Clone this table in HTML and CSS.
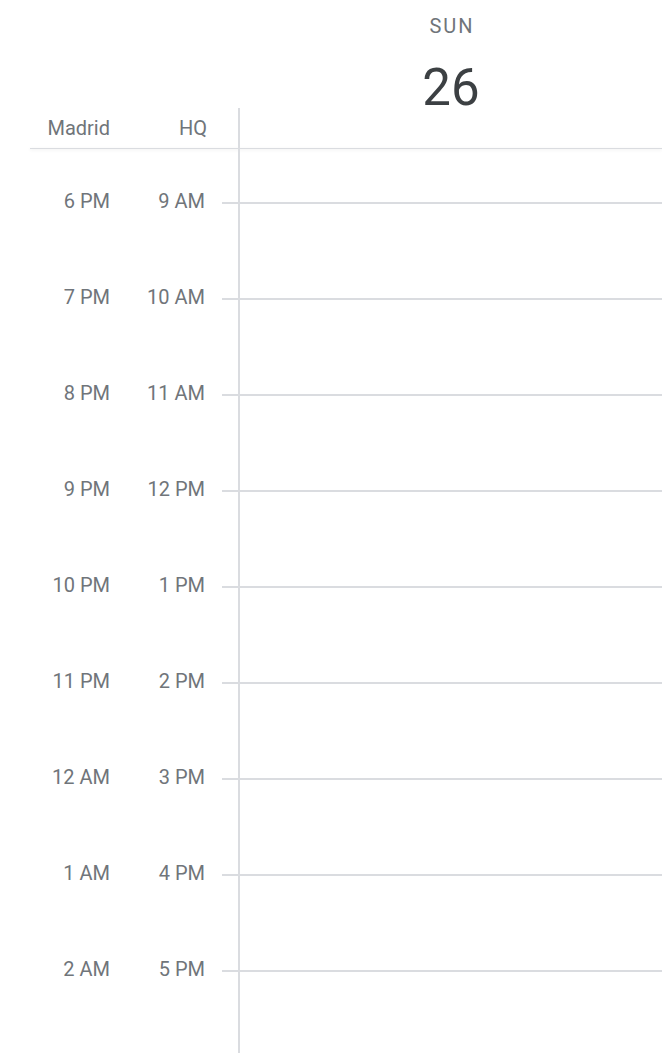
FILE: index.html
```html
<!DOCTYPE html>
<html lang="en">
<head>
<meta charset="utf-8">
<title>Calendar day</title>
<link rel="stylesheet" href="styles.css">
</head>
<body>
<div class="cal">
  <header class="head">
    <div class="head-top">
      <div class="gutter-blank"></div>
      <div class="day-title">
        <div class="dow">SUN</div>
        <div class="dom">26</div>
      </div>
    </div>
    <div class="head-tz">
      <div class="tz-labels">
        <span class="c1">Madrid</span>
        <span class="c2">HQ</span>
      </div>
      <div class="allday"></div>
    </div>
  </header>
  <div class="grid">
    <div class="gutter">
      <div class="spacer"></div>
      <div class="hr"><span class="c1">6 PM</span><span class="c2">9 AM</span><i class="tick"></i></div>
      <div class="hr"><span class="c1">7 PM</span><span class="c2">10 AM</span><i class="tick"></i></div>
      <div class="hr"><span class="c1">8 PM</span><span class="c2">11 AM</span><i class="tick"></i></div>
      <div class="hr"><span class="c1">9 PM</span><span class="c2">12 PM</span><i class="tick"></i></div>
      <div class="hr"><span class="c1">10 PM</span><span class="c2">1 PM</span><i class="tick"></i></div>
      <div class="hr"><span class="c1">11 PM</span><span class="c2">2 PM</span><i class="tick"></i></div>
      <div class="hr"><span class="c1">12 AM</span><span class="c2">3 PM</span><i class="tick"></i></div>
      <div class="hr"><span class="c1">1 AM</span><span class="c2">4 PM</span><i class="tick"></i></div>
      <div class="hr"><span class="c1">2 AM</span><span class="c2">5 PM</span><i class="tick"></i></div>
    </div>
    <div class="day">
      <div class="spacer"></div>
      <div class="slot"></div>
      <div class="slot"></div>
      <div class="slot"></div>
      <div class="slot"></div>
      <div class="slot"></div>
      <div class="slot"></div>
      <div class="slot"></div>
      <div class="slot"></div>
      <div class="slot"></div>
    </div>
  </div>
</div>
</body>
</html>
```
FILE: styles.css
```css
* { box-sizing: border-box; }
html, body {
  margin: 0;
  padding: 0;
  background: #fff;
}
body {
  font-family: Roboto, "Liberation Sans", Arial, sans-serif;
  color: #70757a;
}
.cal {
  width: 662px;
}
.head::after {
  content: "";
  display: block;
  margin-left: 30px;
  border-bottom: 1px solid #dadce0;
  box-shadow: 0 1px 3px rgba(60, 64, 67, 0.12);
}
.head-top {
  display: flex;
  height: 108px;
}
.gutter-blank {
  width: 238px;
  flex: none;
}
.day-title {
  flex: 1;
  display: flex;
  flex-direction: column;
  align-items: center;
  padding-left: 2px;
}
.dow {
  margin-top: 16px;
  font-size: 20px;
  line-height: 20px;
  letter-spacing: 2px;
  color: #70757a;
  padding-left: 2px;
}
.dom {
  margin-top: 30px;
  font-size: 51px;
  line-height: 44px;
  color: #3c4043;
  font-weight: 400;
}
.head-tz {
  display: flex;
  height: 40px;
}
.tz-labels {
  width: 238px;
  flex: none;
  display: flex;
  align-items: center;
  font-size: 20px;
  line-height: 20px;
}
.c1 {
  width: 110px;
  text-align: right;
  flex: none;
}
.c2 {
  width: 97px;
  text-align: right;
  flex: none;
}
.allday {
  flex: 1;
  border-left: 2px solid #dadce0;
}
.grid {
  display: flex;
  height: 904px;
  overflow: hidden;
}
.spacer {
  height: 53px;
}
.gutter {
  width: 238px;
  flex: none;
}
.hr {
  height: 96px;
  display: flex;
  align-items: flex-start;
  font-size: 20px;
  line-height: 20px;
}
.hr .c1, .hr .c2 {
  margin-top: -11px;
}
.hr .c2 {
  width: 95px;
}
.tick {
  margin-left: 17px;
  width: 16px;
  border-top: 2px solid #dadce0;
}
.day {
  flex: 1;
  border-left: 2px solid #dadce0;
}
.slot {
  height: 96px;
  border-top: 2px solid #dadce0;
}
```
